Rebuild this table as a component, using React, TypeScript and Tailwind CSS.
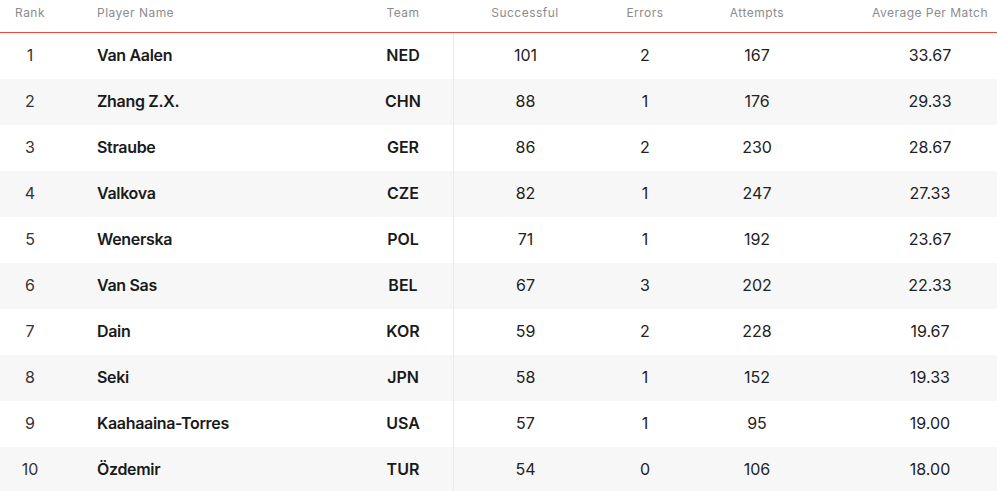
import React from "react";

const rows: [number, string, string, number, number, number, string][] = [
  [1, "Van Aalen", "NED", 101, 2, 167, "33.67"],
  [2, "Zhang Z.X.", "CHN", 88, 1, 176, "29.33"],
  [3, "Straube", "GER", 86, 2, 230, "28.67"],
  [4, "Valkova", "CZE", 82, 1, 247, "27.33"],
  [5, "Wenerska", "POL", 71, 1, 192, "23.67"],
  [6, "Van Sas", "BEL", 67, 3, 202, "22.33"],
  [7, "Dain", "KOR", 59, 2, 228, "19.67"],
  [8, "Seki", "JPN", 58, 1, 152, "19.33"],
  [9, "Kaahaaina-Torres", "USA", 57, 1, 95, "19.00"],
  [10, "Özdemir", "TUR", 54, 0, 106, "18.00"],
];

const grid = "grid grid-cols-[60px_293px_100px_144px_96px_128px_176px]";

export default function App() {
  return (
    <div className="w-[997px] h-[491px] overflow-hidden bg-white text-[#222]" style={{ fontFamily: "Inter, 'Noto Sans', sans-serif" }}>
      <div className={`${grid} h-[33px] items-start pt-[4px] text-[12px] tracking-[0.04em] text-[#8c8c8c] border-b border-[#f0493b]`}>
        <div className="text-center">Rank</div>
        <div className="pl-[37px]">Player Name</div>
        <div className="text-center">Team</div>
        <div className="text-center">Successful</div>
        <div className="text-center">Errors</div>
        <div className="text-center">Attempts</div>
        <div className="pl-[42px] text-center">Average Per Match</div>
      </div>
      {rows.map((r, i) => (
        <div key={r[0]} className={`${grid} h-[46px] items-center text-[16px] ${i % 2 === 1 ? "bg-[#f7f7f7]" : "bg-white"}`}>
          <div className="pb-[2px] text-center text-[#333]">{r[0]}</div>
          <div className="pb-[2px] pl-[37px] font-semibold tracking-[-0.02em] text-[#1a1a1a]">{r[1]}</div>
          <div className="pb-[2px] text-center font-semibold text-[#1a1a1a]">{r[2]}</div>
          <div className="pb-[2px] h-full flex items-center justify-center border-l border-[#ebebeb]">{r[3]}</div>
          <div className="pb-[2px] text-center">{r[4]}</div>
          <div className="pb-[2px] text-center">{r[5]}</div>
          <div className="pb-[2px] pl-[42px] text-center">{r[6]}</div>
        </div>
      ))}
    </div>
  );
}
